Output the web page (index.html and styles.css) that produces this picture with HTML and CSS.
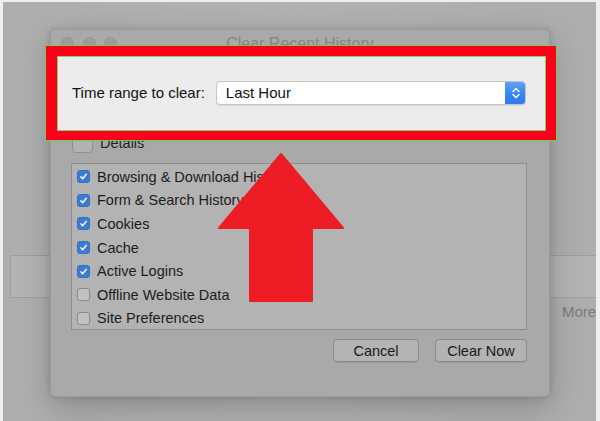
FILE: index.html
```html
<!DOCTYPE html>
<html>
<head>
<meta charset="utf-8">
<link rel="stylesheet" href="styles.css">
</head>
<body>
<div class="screen">
  <div class="bg-row">
    <div class="bg-field"></div>
    <div class="bg-more">More</div>
  </div>

  <div class="dialog">
    <div class="titlebar">
      <div class="lights"><span class="light"></span><span class="light"></span><span class="light"></span></div>
      <div class="title">Clear Recent History</div>
    </div>
    <div class="range-space"></div>
    <div class="details-row">
      <span class="disclosure"></span>
      <span class="details-label">Details</span>
    </div>
    <div class="list">
      <div class="item"><span class="cb on"><svg viewBox="0 0 13 13"><path d="M3.3 6.8 L5.5 9.2 L9.8 3.8"/></svg></span>Browsing &amp; Download History</div>
      <div class="item"><span class="cb on"><svg viewBox="0 0 13 13"><path d="M3.3 6.8 L5.5 9.2 L9.8 3.8"/></svg></span>Form &amp; Search History</div>
      <div class="item"><span class="cb on"><svg viewBox="0 0 13 13"><path d="M3.3 6.8 L5.5 9.2 L9.8 3.8"/></svg></span>Cookies</div>
      <div class="item"><span class="cb on"><svg viewBox="0 0 13 13"><path d="M3.3 6.8 L5.5 9.2 L9.8 3.8"/></svg></span>Cache</div>
      <div class="item"><span class="cb on"><svg viewBox="0 0 13 13"><path d="M3.3 6.8 L5.5 9.2 L9.8 3.8"/></svg></span>Active Logins</div>
      <div class="item"><span class="cb"></span>Offline Website Data</div>
      <div class="item"><span class="cb"></span>Site Preferences</div>
    </div>
    <div class="buttons">
      <button class="btn btn-cancel">Cancel</button>
      <button class="btn btn-clear">Clear Now</button>
    </div>
  </div>

  <svg class="arrow" width="130" height="154" viewBox="0 0 130 154">
    <polygon points="62,2 124,76 93,76 93,149 31,149 31,76 0,76" transform="translate(2,2)"/>
  </svg>

  <div class="callout">
    <div class="callout-inner">
      <span class="range-label">Time range to clear:</span>
      <div class="select">
        <span class="select-value">Last Hour</span>
        <span class="stepper">
          <svg width="10" height="14" viewBox="0 0 10 14"><path d="M2 5.5 L5 2.5 L8 5.5 M2 8.5 L5 11.5 L8 8.5"/></svg>
        </span>
      </div>
    </div>
  </div>
</div>
</body>
</html>
```

FILE: styles.css
```css
html, body {
  margin: 0;
  padding: 0;
  background: #efefef;
}
body {
  font-family: "Liberation Sans", Arial, sans-serif;
  width: 600px;
  height: 421px;
  overflow: hidden;
}
.screen {
  position: relative;
  margin: 2px 4px 0 3px;
  height: 419px;
  background: linear-gradient(90deg, #aeaeae 0%, #b1b1b1 50%, #adadad 100%);
  overflow: hidden;
}

/* background content behind the dialog */
.bg-row {
  display: flex;
  align-items: flex-start;
  padding-top: 253px;
  padding-left: 7px;
}
.bg-field {
  flex: 1;
  height: 41px;
  border: 1px solid #9d9d9d;
  border-right: none;
  background: #b3b3b3;
  position: relative;
}
.bg-more {
  position: absolute;
  left: 559px;
  top: 301px;
  font-size: 15px;
  color: #7a7a7a;
}

/* dialog window */
.dialog {
  position: absolute;
  left: 47px;
  top: 27px;
  width: 500px;
  height: 368px;
  box-sizing: border-box;
  background: #a9a9a9;
  border: 1px solid #9a9a9a;
  border-radius: 5px;
  box-shadow: 0 10px 30px rgba(0, 0, 0, 0.22), 0 0 6px rgba(0, 0, 0, 0.12);
  padding: 0 22px 0 20px;
  display: flex;
  flex-direction: column;
}
.titlebar {
  position: relative;
  height: 26px;
  display: flex;
  align-items: flex-start;
  justify-content: center;
  margin: 0 -22px 0 -20px;
}
.lights {
  position: absolute;
  left: 10px;
  top: 7px;
  display: flex;
  gap: 8.5px;
}
.light {
  width: 13px;
  height: 13px;
  border-radius: 50%;
  background: #9c9c9c;
  border: 1px solid #949494;
  box-sizing: border-box;
}
.title {
  font-size: 16px;
  line-height: 18px;
  color: #858585;
  padding-top: 5px;
}
.range-space {
  height: 76px;
}
.details-row {
  display: flex;
  align-items: center;
  height: 21px;
  gap: 7px;
}
.disclosure {
  width: 21px;
  height: 21px;
  box-sizing: border-box;
  border: 1px solid #8f8f8f;
  border-radius: 4px;
  background: #b2b2b2;
  margin-left: 1px;
}
.details-label {
  font-size: 14.5px;
  color: #1e1e1e;
}
.list {
  margin-top: 10px;
  height: 167px;
  box-sizing: border-box;
  border: 1px solid #8e8e8e;
  background: #b3b3b3;
  padding: 1px 0 0 5px;
}
.item {
  height: 23.6px;
  display: flex;
  align-items: center;
  gap: 7px;
  font-size: 14.5px;
  color: #1c1c1c;
  white-space: nowrap;
}
.cb {
  width: 13px;
  height: 13px;
  box-sizing: border-box;
  border-radius: 3px;
  border: 1px solid #8a8a8a;
  background: #c2c2c2;
  flex: none;
  display: flex;
}
.cb.on {
  background: #3d7bd2;
  border-color: #3570c4;
}
.cb svg {
  width: 11px;
  height: 11px;
  fill: none;
  stroke: #ffffff;
  stroke-width: 1.6;
  stroke-linecap: round;
  stroke-linejoin: round;
}
.buttons {
  margin-top: 9px;
  display: flex;
  justify-content: flex-end;
  gap: 16px;
}
.btn {
  font-family: "Liberation Sans", Arial, sans-serif;
  font-size: 14.5px;
  color: #1a1a1a;
  height: 23px;
  box-sizing: border-box;
  border: 1px solid #8c8c8c;
  border-radius: 4px;
  background: #b3b3b3;
  padding: 0;
  box-shadow: 0 1px 0 rgba(0,0,0,0.08);
}
.btn-cancel { width: 86px; }
.btn-clear { width: 92px; }

/* annotation arrow */
.arrow {
  position: absolute;
  left: 214px;
  top: 148px;
}
.arrow polygon {
  fill: #ee1c25;
  stroke: #ee1c25;
  stroke-width: 2;
  stroke-linejoin: round;
}

/* annotation callout */
.callout {
  position: absolute;
  left: 42px;
  top: 43px;
  width: 512px;
  height: 96px;
  box-sizing: border-box;
  background: #fb0019;
  border: 1px solid #6ccf5a;
  padding: 10px 10px 9px 11px;
}
.callout-inner {
  height: 100%;
  box-sizing: border-box;
  background: #ececec;
  border: 1px solid #7fd36e;
  display: flex;
  align-items: center;
  padding: 0 19px 2px 14px;
  gap: 11px;
}
.range-label {
  font-size: 15px;
  color: #111;
  white-space: nowrap;
}
.select {
  flex: 1;
  height: 24px;
  box-sizing: border-box;
  background: #ffffff;
  border: 1px solid #c4c4c4;
  border-radius: 4px;
  box-shadow: 0 1px 1px rgba(0,0,0,0.08);
  display: flex;
  align-items: center;
  overflow: hidden;
}
.select-value {
  flex: 1;
  padding-left: 9px;
  font-size: 15px;
  color: #111;
}
.stepper {
  width: 21px;
  height: 24px;
  margin: -1px -1px -1px 0;
  background: linear-gradient(180deg, #62a4f8 0%, #3a86f4 50%, #2c78ee 100%);
  border-radius: 0 4px 4px 0;
  display: flex;
  align-items: center;
  justify-content: center;
}
.stepper path {
  fill: none;
  stroke: #ffffff;
  stroke-width: 1.5;
  stroke-linecap: round;
  stroke-linejoin: round;
}
```
